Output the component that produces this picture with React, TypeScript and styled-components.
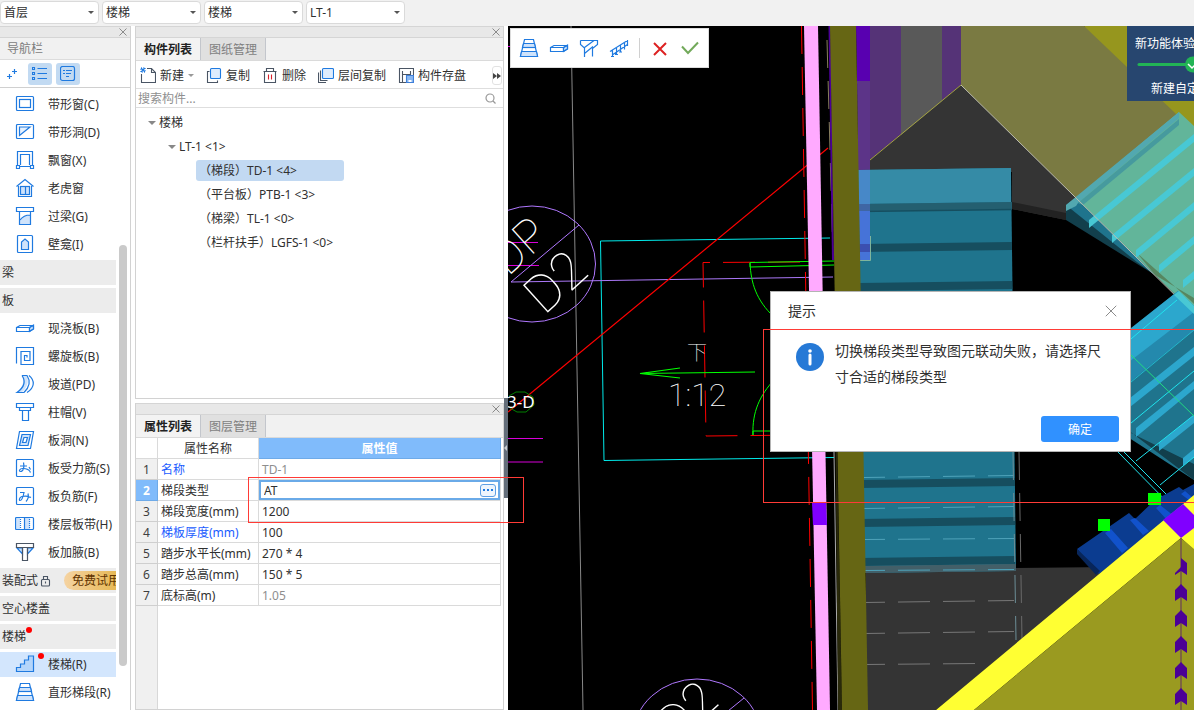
import React from "react";
import styled, { createGlobalStyle, css } from "styled-components";

const BLUE = "#1f7ae0";
const PALE = "#cfe3fb";
const INK = "#4a5564";

const GlobalStyle = createGlobalStyle`
  * { box-sizing: border-box; }
  body { margin: 0; overflow: hidden; }
  body, button, input, select, table {
    font: 12px/16px "Noto Sans", "Noto Sans CJK SC", sans-serif;
    color: #303030;
  }
  button { border: 0; padding: 0; background: none; cursor: pointer; }
  ul { list-style: none; margin: 0; padding: 0; }
`;

/* ---------- page frame ---------- */

const Page = styled.div`
  display: flex;
  flex-direction: column;
  height: 100vh;
  background: #fff;
`;

const TopBar = styled.header`
  display: flex;
  gap: 3px;
  height: 26px;
  padding: 1px 0 2px;
  background: #f1f1f1;
`;

const SelectBox = styled.label`
  display: grid;
  align-items: center;
  width: 99px;
  height: 23px;
  > * { grid-area: 1 / 1; }
  > svg { justify-self: end; margin-right: 5px; pointer-events: none; }
`;

const Select = styled.select`
  appearance: none;
  width: 100%;
  height: 23px;
  padding: 0 16px 0 3px;
  border: 1px solid #dadada;
  border-radius: 4px;
  background: #fff;
`;

const Workspace = styled.main`
  flex: 1;
  min-height: 0;
  display: grid;
  grid-template-columns: 131px 369px minmax(0, 1fr);
  column-gap: 4px;
`;

const Docks = styled.div`
  min-height: 0;
  display: grid;
  grid-template-rows: minmax(0, 373fr) minmax(0, 307fr);
  row-gap: 4px;
`;

const Panel = styled.section<{ $flushLeft?: boolean }>`
  display: flex;
  flex-direction: column;
  min-height: 0;
  overflow: hidden;
  background: #fff;
  border: solid #d2d2d2;
  border-width: ${(p) => (p.$flushLeft ? "0 1px 0 0" : "0 1px 1px 1px")};
`;

const Grip = styled.div`
  flex: none;
  display: flex;
  justify-content: flex-end;
  align-items: center;
  height: 12px;
  padding-right: 3px;
  background: #e8e8e8;
  border: solid #d5d5d5;
  border-width: 1px 0;
`;

const IconButton = styled.button`
  display: flex;
  align-items: center;
  justify-content: center;
`;

/* ---------- navigation ---------- */

const NavTitle = styled.h2`
  flex: none;
  margin: 0;
  height: 22px;
  padding-left: 7px;
  font-size: 12px;
  line-height: 21px;
  font-weight: 400;
  color: #7d7d7d;
  background: #f1f1f1;
  border-bottom: 1px solid #dcdcdc;
`;

const NavTools = styled.div`
  flex: none;
  display: flex;
  gap: 4px;
  align-items: center;
  height: 28px;
  border-bottom: 1px solid #d0d0d0;
`;

const NavTool = styled(IconButton)<{ $on?: boolean }>`
  width: 24px;
  height: 22px;
  border-radius: 3px;
  background: ${(p) => (p.$on ? "#c2daf2" : "none")};
`;

const NavBody = styled.div`
  flex: 1;
  min-height: 0;
  display: flex;
  justify-content: space-between;
`;

const NavList = styled.ul`
  display: flex;
  flex-direction: column;
  gap: 3px;
  width: 116px;
  padding-top: 4px;
  overflow: hidden;
  > li { flex: none; }
`;

const Row = styled.button<{ $kind: "item" | "group"; $on?: boolean }>`
  display: flex;
  align-items: center;
  width: 116px;
  height: 25px;
  white-space: nowrap;
  overflow: hidden;
  ${(p) =>
    p.$kind === "item"
      ? css`
          gap: 13px;
          padding-left: 15px;
          background: ${p.$on ? "#d3e6fd" : "none"};
        `
      : css`
          padding-left: 2px;
          background: #ececec;
        `}
  > svg { flex: none; }
`;

const Dotted = styled.span`
  position: relative;
  display: flex;
`;

const Dot = styled.i<{ $item?: boolean }>`
  position: absolute;
  top: ${(p) => (p.$item ? "-1px" : "-2px")};
  right: ${(p) => (p.$item ? "-9px" : "-6px")};
  width: 6px;
  height: 6px;
  border-radius: 50%;
  background: #f00;
`;

const Trial = styled.span`
  flex: none;
  height: 19px;
  margin-left: 13px;
  padding: 0 8px;
  border-radius: 10px;
  line-height: 19px;
  color: #5f3300;
  background: linear-gradient(90deg, #f5d3a2, #e6b751 55px);
`;

const Scrollbar = styled.div`
  flex: none;
  width: 8px;
  margin-right: 3px;
  padding-top: 157px;
`;

const Thumb = styled.div`
  height: 421px;
  border-radius: 4px;
  background: #cacaca;
`;

/* ---------- docks ---------- */

const Tabs = styled.div`
  flex: none;
  display: flex;
  height: 23px;
  background: #f1f1f1;
  border-bottom: 1px solid #dadada;
`;

const Tab = styled.button<{ $on?: boolean }>`
  width: 65px;
  height: 22px;
  padding-top: 2px;
  border-right: 1px solid #c3c6cc;
  color: ${(p) => (p.$on ? "#222" : "#7f7f7f")};
  font-weight: ${(p) => (p.$on ? 700 : 400)};
  background: ${(p) => (p.$on ? "#f3f3f3" : "#e0e0e0")};
`;

const Tools = styled.div`
  flex: none;
  display: flex;
  align-items: center;
  gap: 12px;
  height: 28px;
  padding: 2px 0 0 4px;
  border-bottom: 1px solid #dedede;
  white-space: nowrap;
`;

const Tool = styled.button`
  display: flex;
  align-items: center;
  gap: 4px;
  > svg { flex: none; }
`;

const More = styled(IconButton)`
  width: 10px;
  height: 19px;
  margin: 0 1px 0 auto;
  border: 1px solid #e2e2e2;
  border-radius: 3px;
`;

const Search = styled.label`
  flex: none;
  display: flex;
  align-items: center;
  height: 19px;
  padding-right: 7px;
  border-bottom: 1px solid #dedede;
`;

const SearchInput = styled.input`
  flex: 1;
  min-width: 0;
  height: 18px;
  padding: 0 2px;
  border: 0;
  outline: 0;
  &::placeholder { color: #8f8f8f; opacity: 1; }
`;

const Tree = styled.ul`
  padding-top: 2px;
`;

const Leaf = styled.li<{ $depth: number }>`
  display: flex;
  align-items: center;
  height: 24px;
  padding-left: ${(p) => p.$depth * 20 - 8}px;
`;

const LeafButton = styled.button<{ $leaf?: boolean; $on?: boolean }>`
  display: flex;
  align-items: center;
  gap: 3px;
  height: 21px;
  width: ${(p) => (p.$leaf ? "148px" : "auto")};
  padding-top: 2px;
  padding-left: ${(p) => (p.$leaf ? "3px" : "0")};
  margin-left: ${(p) => (p.$leaf ? "8px" : "0")};
  border-radius: 3px;
  white-space: nowrap;
  background: ${(p) => (p.$on ? "#c2d9f2" : "none")};
`;

const GridWrap = styled.div`
  flex: 1;
  min-height: 0;
  padding-right: 2px;
  background: linear-gradient(90deg, #f0f0f0 21px, #d8d8d8 21px 22px, #fff 22px);
`;

const Grid = styled.table`
  width: 100%;
  table-layout: fixed;
  border-collapse: separate;
  border-spacing: 0;
`;

const Head = styled.th<{ $on?: boolean; $w?: number }>`
  width: ${(p) => (p.$w ? p.$w + "px" : "auto")};
  height: 21px;
  padding: 2px 0 0;
  font-weight: ${(p) => (p.$on ? 700 : 400)};
  color: ${(p) => (p.$on ? "#fff" : "#303030")};
  background: ${(p) => (p.$on ? "#80bbfb" : "#fff")};
  border: solid ${(p) => (p.$on ? "#6eaae8" : "#dadada")};
  border-width: 0 1px 1px 0;
`;

const Num = styled.th<{ $on?: boolean }>`
  height: 21px;
  padding: 2px 0 0;
  font-weight: ${(p) => (p.$on ? 700 : 400)};
  color: ${(p) => (p.$on ? "#fff" : "#404040")};
  background: ${(p) => (p.$on ? "#80bbfb" : "#f0f0f0")};
  border: solid ${(p) => (p.$on ? "#6eaae8" : "#cfcfcf")};
  border-width: 0 1px 1px 0;
`;

const Cell = styled.td<{ $tone?: "link" | "muted"; $edit?: boolean }>`
  height: 21px;
  padding: ${(p) => (p.$edit ? "0" : "2px 3px 0")};
  white-space: nowrap;
  color: ${(p) => (p.$tone === "link" ? "#1a5cff" : p.$tone === "muted" ? "#8e8e8e" : "#303030")};
  border: solid #dadada;
  border-width: 0 1px 1px 0;
`;

const Editor = styled.div`
  display: flex;
  align-items: center;
  height: 20px;
  padding: 0 2px 0 3px;
  border: 2px solid #6aaae8;
`;

const EditInput = styled.input`
  flex: 1;
  min-width: 0;
  height: 16px;
  padding: 2px 0 0;
  border: 0;
  outline: 0;
`;

const Dots = styled(IconButton)`
  width: 16px;
  height: 13px;
  border: 1px solid #5e9fe4;
  border-radius: 3px;
  background: #eef5fd;
`;

/* ---------- drawing area ---------- */

const Viewport = styled.section`
  position: relative;
  min-height: 0;
  background: #000;
`;

const Canvas = styled.svg`
  display: block;
  width: 100%;
  height: 100%;
`;

const Splitter = styled.button`
  position: absolute;
  left: -4px;
  top: 372px;
  width: 4px;
  height: 100px;
  display: flex;
  align-items: center;
  background: #646e7a;
`;

const FloatBar = styled.div`
  position: absolute;
  left: 2px;
  top: 2px;
  display: flex;
  align-items: center;
  gap: 10px;
  height: 40px;
  padding: 0 8px;
  background: #fff;
  border: 1px solid #dcdcdc;
`;

const Rule = styled.i`
  width: 1px;
  height: 20px;
  background: #d0d0d0;
`;

const Promo = styled.aside`
  position: absolute;
  right: 0;
  top: 0;
  display: flex;
  flex-direction: column;
  width: 67px;
  height: 75px;
  padding: 10px 0 4px 8px;
  overflow: hidden;
  white-space: nowrap;
  color: #fff;
  background: #27466f;
  > svg { flex: none; margin: 4px 0 8px; }
`;

const PromoStep = styled.span`
  padding-left: 16px;
`;

const Dialog = styled.div`
  position: absolute;
  left: 262px;
  top: 265px;
  width: 361px;
  padding: 0 11px 9px 17px;
  background: #fff;
  border: 1px solid #b4b4b4;
`;

const DialogHead = styled.div`
  display: flex;
  align-items: center;
  justify-content: space-between;
  height: 38px;
`;

const DialogClose = styled(IconButton)`
  width: 16px;
  height: 16px;
`;

const DialogTitle = styled.h3`
  margin: 0;
  font-size: 14px;
  line-height: 20px;
  font-weight: 400;
`;

const DialogBody = styled.div`
  display: flex;
  gap: 11px;
  padding: 8px 8px 0 8px;
  height: 86px;
  > svg { flex: none; margin-top: 5px; }
`;

const Message = styled.p`
  margin: 0;
  width: 270px;
  font-size: 14px;
  line-height: 26px;
`;

const DialogFoot = styled.div`
  display: flex;
  justify-content: flex-end;
`;

const Confirm = styled.button`
  width: 78px;
  height: 26px;
  padding-top: 2px;
  border-radius: 3px;
  color: #fff;
  background: #3091ff;
`;

const Mark = styled.div<{ $x: number; $y: number; $w?: number; $h: number }>`
  position: absolute;
  left: ${(p) => p.$x}px;
  top: ${(p) => p.$y}px;
  height: ${(p) => p.$h}px;
  border: 1px solid #ff3b36;
  pointer-events: none;
  ${(p) => (p.$w ? `width: ${p.$w}px;` : "right: 0; border-right: 0;")}
`;

/* ---------- icons ---------- */

const Cross = ({ size = 8, color = "#8b8b8b" }: { size?: number; color?: string }) => (
  <svg width={size} height={size} viewBox="0 0 8 8" stroke={color} fill="none">
    <path d="M.5.5l7 7M7.5.5l-7 7" vectorEffect="non-scaling-stroke" />
  </svg>
);

const Caret = ({ w = 6, color = "#555" }: { w?: number; color?: string }) => (
  <svg width={w} height={w / 2} viewBox="0 0 6 3" fill={color}><path d="M0 0h6L3 3z" /></svg>
);

const glyphs: Record<string, React.ReactNode> = {
  window: <><rect x="1.5" y="2.5" width="17" height="14" rx="1" /><rect x="4.5" y="5.5" width="11" height="8" /></>,
  hole: <><rect x="1.5" y="2.5" width="17" height="14" rx="1" /><path d="M4.5 5h10.500l-10.500 8.500z" fill="#e6f1fe" /></>,
  bay: <><path d="M2.500 15V1.500h15V15M5.500 15V4.500h9V15M1.500 15.500h3v3h-3zM15.500 15.500h3v3h-3zM4.500 16.500h11" /></>,
  dormer: <><path d="M1.500 8.500L10 1.500l8.500 7M3.500 8v10.500h13V8" /><rect x="5.500" y="8.500" width="9" height="8" fill={PALE} /><path d="M10.500 8.500v8" /></>,
  lintel: <><path d="M4.500 14c3-4 6-5 11-5v9.500h-11z" fill={PALE} stroke="none" /><path d="M1.500 1.500h17v4h-17zM4.500 6v12.500h11V6M5 14c3-4 6-5 10-5" /></>,
  niche: <><rect x="2.500" y="1.500" width="15" height="17" rx="1" /><path d="M6.500 15.500V8L10 5l3.500 3v7.500z" fill={PALE} /></>,
  slab: <><path d="M14.500 9.500l4-2.500v4l-4 2.500z" fill={PALE} /><path d="M1.500 9.500h13v4h-13zM1.500 9.500L5 7.500h13.500L14.500 9.500M18.500 7.500V11l-4 2.500" /></>,
  spiral: <path d="M1.500 17.500V1.500h17v17h-12.500V5.500h9v9h-5.500v-5h2.500v2" />,
  ramp: <><path d="M7 2c3 6 0 12-5 16h5c5-4 7-10 5-16z" fill={PALE} stroke="none" /><path d="M7 1.500c4 6 2 12-5 17h7M7 1.500h5c4 6 2 12-3 17M14 1.500c6 5 6 12-2 17" /></>,
  cap: <path d="M1.500 1.500h17v4h-17zM4.500 5.500h11v3h-11zM7.500 8.500v10h6v-10" />,
  opening: <><path d="M4.500 1.500h14L15.500 18.500h-14z" /><path d="M7 4.500h8.500L13 15.500H4.500z" fill={PALE} /><path d="M9 7.500h3.500l-1.500 5H7.500z" fill="#fff" /></>,
  rebar: <><rect x="1.500" y="1.500" width="17" height="17" rx="1" /><path d="M5 8h7M8.500 4.500c1 4 0 9-3 9-2 0-1-3 2-3 4 0 7 1 8 4M14 9l1.500 2.500" /></>,
  negbar: <><rect x="1.500" y="1.500" width="17" height="17" rx="1" /><path d="M5 6.500h4c-1 5-2 8-4 8-1 0-1-3 2-4 4-1 7 0 9 1M13 7.500c1 4 0 6-2 8" /></>,
  strip: <><path d="M10 4h5v12h-5zM1 4h4v12H1z" fill={PALE} stroke="none" /><rect x=".5" y="3.500" width="18" height="12" rx="1" /><path d="M9.500 4v12" /><path d="M5.500 5v10M14.500 5v10" strokeDasharray="1 1" /></>,
  haunch: <><path d="M2 6l5.500 6V6zM18 6l-5.500 6V6z" fill={PALE} stroke={BLUE} /><path d="M1.500 1.500h17v4h-17zM7.500 6v12.500h5V6" stroke={INK} /></>,
  stairs: <path d="M1.500 17.500v-4h4v-3.500h4V6h4V2h5v15.500z" fill="#b4d5fa" />,
  flight: <><path d="M5.500 1.500h9l4 17h-17z" fill="#fff" /><path d="M4.500 5.500h11l1 4h-13zM2.500 13.500h15l1 5h-17z" fill={PALE} /><path d="M3.500 9.500h13" /></>,
  beam: <path d="M1.500 2.500h17v4L13.500 10.500v8M1.500 2.500v4l4 3.500v9M5.500 9.500L15 2.500M5.500 15.500l8.500-7" />,
  rail: <path d="M1 13.500L18.500 2.500M4 16.500L18.500 6.500M3.500 12v7M7.500 10v6.500M11.500 7.500V14M15.500 5v6.500M18.500 2v6M2 18.500h3M6 16.500h3M10 14h3" />,
};

const Glyph = ({ name }: { name: string }) => (
  <svg width="20" height="21" viewBox="0 0 20 21" fill="none" stroke={BLUE} strokeWidth="1.2">{glyphs[name]}</svg>
);

const toolIcons: Record<string, React.ReactNode> = {
  create: <><path d="M7 1.500h4.500l4 4v10h-14V7M11.500 1.500v4h4" /><path d="M1 1h4v4H1z" stroke={BLUE} strokeDasharray="1 1" /><path d="M1 1l4 4M5 1L1 5" stroke={BLUE} /></>,
  copy: <><path d="M3.500 4.500h-2v11h10v-2" /><rect x="4.500" y="1.500" width="10" height="10" rx="1" stroke={BLUE} fill="#dfecfd" /></>,
  remove: <><path d="M1.500 4.500h13M2.500 4.500v11h11v-11M4.500 4.500v-3h7v3" /><path d="M6.500 7.500v5M9.500 7.500v5" stroke="#d9202a" /></>,
  layers: <><path d="M.5 5.500v10H8M2.500 3.500v10h7" /><rect x="4.500" y="1.500" width="11" height="10" rx="1" stroke={BLUE} fill="#dfecfd" /></>,
  save: <><path d="M8 15.500H1.500v-14h14V8M4.500 4v11M4.500 7.500h8M12.500 4v4" /><path d="M8.500 8.500h7v7h-7z" fill="#8ab8f2" stroke="#3f7fd8" /><path d="M10.500 13h3v2h-3z" fill="#fff" stroke="none" /></>,
};

const ToolIcon = ({ name }: { name: string }) => (
  <svg width="16" height="18" viewBox="0 0 16 18" fill="none" stroke={INK} strokeWidth="1.1">{toolIcons[name]}</svg>
);

/* ---------- data ---------- */

type NavEntry = { label: string; icon?: string; on?: boolean; dot?: boolean; trial?: boolean };

const nav: NavEntry[] = [
  { label: "带形窗(C)", icon: "window" },
  { label: "带形洞(D)", icon: "hole" },
  { label: "飘窗(X)", icon: "bay" },
  { label: "老虎窗", icon: "dormer" },
  { label: "过梁(G)", icon: "lintel" },
  { label: "壁龛(I)", icon: "niche" },
  { label: "梁" },
  { label: "板" },
  { label: "现浇板(B)", icon: "slab" },
  { label: "螺旋板(B)", icon: "spiral" },
  { label: "坡道(PD)", icon: "ramp" },
  { label: "柱帽(V)", icon: "cap" },
  { label: "板洞(N)", icon: "opening" },
  { label: "板受力筋(S)", icon: "rebar" },
  { label: "板负筋(F)", icon: "negbar" },
  { label: "楼层板带(H)", icon: "strip" },
  { label: "板加腋(B)", icon: "haunch" },
  { label: "装配式", trial: true },
  { label: "空心楼盖" },
  { label: "楼梯", dot: true },
  { label: "楼梯(R)", icon: "stairs", on: true, dot: true },
  { label: "直形梯段(R)", icon: "flight" },
];

const tree = [
  { label: "楼梯", depth: 1 },
  { label: "LT-1 <1>", depth: 2 },
  { label: "（梯段）TD-1 <4>", depth: 3, on: true },
  { label: "（平台板）PTB-1 <3>", depth: 3 },
  { label: "（梯梁）TL-1 <0>", depth: 3 },
  { label: "（栏杆扶手）LGFS-1 <0>", depth: 3 },
];

const props: { name: string; value: string; link?: boolean; muted?: boolean; edit?: boolean }[] = [
  { name: "名称", value: "TD-1", link: true, muted: true },
  { name: "梯段类型", value: "AT", edit: true },
  { name: "梯段宽度(mm)", value: "1200" },
  { name: "梯板厚度(mm)", value: "100", link: true },
  { name: "踏步水平长(mm)", value: "270 * 4" },
  { name: "踏步总高(mm)", value: "150 * 5" },
  { name: "底标高(m)", value: "1.05", muted: true },
];

/* ---------- model drawing ---------- */

const treadBands = [
  [244, 242], [283, 281], [322, 320], [361, 359], [401, 399], [441, 439], [480, 478], [519, 517], [558, 556],
];
const dashedRows = [[477, 475], [508, 506], [539, 538], [570, 569], [602, 600], [633, 631], [664, 663]];

const Scene = () => (
  <Canvas viewBox="508 26 686 684" preserveAspectRatio="xMinYMin slice" fill="none" aria-label="model view">
    <path d="M571 26L583 710" stroke="#888" />

    {/* storey floor and roof planes */}
    <path d="M870 160L961 85L1076 198L1066 220L1012 209V172H858V160z" fill="#343434" />
    <path d="M1012 202L1066 213V220L1012 209z" fill="#222" />
    <path d="M1016 568L1110 567L936 710H866V568z" fill="#343434" />
    <path d="M1084 26H1194V313L1160 268L1128 120z" fill="#96961e" />
    <path d="M961 26H1084L1174 112L1180 118L1076 198L961 85z" fill="#7a7a42" />
    <path d="M856 26H870V81H857z" fill="#5800b0" />
    <path d="M857 81H870V170H858z" fill="#5c3488" />
    <path d="M870 26H961V85L870 160z" fill="#553377" />
    <path d="M901 26H942V101L901 135z" fill="#595959" />
    <path d="M870 160L961 85" stroke="#a3a340" />

    {/* left flight */}
    <path d="M858 170L1011 168L1016 571L864 573z" fill="#1f748d" />
    <path d="M858 170L1011 168V202L858 204z" fill="#358ba6" />
    <path d="M858 204L1012 202V209L858 211z" fill="#245f70" />
    <path d="M858 211.500L1012 209.500" stroke="#164e5f" strokeWidth="1.500" />
    {treadBands.map(([l, r]) => (
      <path key={l} d={`M859 ${l}L${r > 440 ? 1015 : 1012} ${r}v8L859 ${l + 8}z`} fill="#164e5f" />
    ))}
    <path d="M864 566L1016 564V571L864 573z" fill="#435f68" />
    <path d="M859 170H870V204H859z" fill="#4788c8" />
    <path d="M859 204H870V211H859z" fill="#3f66a4" />
    <path d="M859 211H870V260H860z" fill="#4673d8" />
    <path d="M859 244H870V252H860z" fill="#3b4fb0" />
    <path d="M860 260.500H870.500V236" stroke="#7fb59c" />
    {dashedRows.map(([l, r], i) => (
      <path key={l} d={`M864 ${l}.5L${i > 5 ? 980 : 1014} ${r}.5`} stroke={i < 4 ? "#4fa3ba" : "#777"} strokeDasharray="32 13" strokeDashoffset="11" />
    ))}
    <path d="M1013 452L1016 640" stroke="#6b8d96" strokeDasharray="28 13" />
    <path d="M1019 452L1022 640" stroke="#6a6a6a" strokeDasharray="28 13" />

    {/* upper right flight */}
    <path d="M1066 205V220L1155 275L1085 200z" fill="#123f4c" />
    <path d="M1066 205L1076 198L1140 260L1155 275L1137 262z" fill="#1f748d" />
    <path d="M1076 198L1179 112L1194 126V313L1155 275z" fill="#62b59a" />
    <path d="M1137 253L1190 300L1194 304V298L1155 275z" fill="#578660" />
    <path d="M1066 205L1179 112V118L1078 203L1076 206L1066 211z" fill="#52a8b0" />
    <path d="M1078 203L1179 119V125L1083 205z" fill="#469a9e" />
    <g fill="#48c8d4">
      <path d="M1089 220L1194 134V142L1089 228z" />
      <path d="M1112 235L1194 168V176L1112 243z" />
      <path d="M1136 250L1194 202V210L1136 258z" />
      <path d="M1159 265L1194 236V244L1159 273z" />
      <path d="M1183 280L1194 271V279L1183 288z" />
    </g>
    <path d="M961 85L1186 306" stroke="#bdbdb0" />

    {/* lower right flight */}
    <path d="M1120 432L1131 328L1178 291L1194 306V480z" fill="#1f748d" />
    <path d="M1120 424L1131 433L1194 464V480z" fill="#123f4c" />
    <path d="M1125 360L1194 310V330L1125 386z" fill="#2489ad" />
    <g fill="#2ca7cd">
      <path d="M1125 333L1178 291L1194 306V312L1125 365z" />
      <path d="M1125 402L1194 347V356L1125 411z" />
      <path d="M1136 428L1194 381V389L1136 437z" />
      <path d="M1159 443L1194 415V423L1159 451z" />
      <path d="M1183 458L1194 449V457L1183 466z" />
    </g>
    <path d="M1174 295L1179 291L1194 306V314z" fill="#48c8d4" />
    <path d="M1125 344L1177 300M1125 428L1194 371M1136 461L1194 415M1160 485L1194 457M1118 452L1176 511M1124 452L1182 510" stroke="#20e3ee" />
    <path d="M1125 387L1194 330" stroke="#23b7cc" />
    <path d="M1131 355L1194 416" stroke="#22dc80" />

    {/* selected flight with grips */}
    <path d="M1077 549L1129 513L1135 519L1155 500L1179 487L1183 490L1194 484V500L1099 574z" fill="#0b3c90" />
    <path d="M1077 549V554L1096 575L1100 571z" fill="#08265a" />
    <path d="M1105 533L1111 529L1128 548L1122 553zM1130 520L1135 518L1149 531L1143 535zM1156 508L1160 505L1174 516L1168 521zM1181 494L1185 491L1194 499V504z" fill="#1152cc" />
    <path d="M936 710L1194 495V550L1181 538L974 710z" fill="#ffff33" />
    <path d="M974 710L1181 538L1194 549V710z" fill="#9a9a20" />
    <path d="M1163 520L1183 504L1194 515V528L1181 538z" fill="#8000ff" />
    <path d="M1098 519h12v12h-12zM1148 493h13v12h-13z" fill="#0f0" />
    <path d="M1181 538V710" stroke="#7d6440" strokeWidth="2" />
    {[584, 610, 636, 662, 688].map((y) => (
      <path key={y} d={`M1175 ${y + 6}L1181 ${y}L1187 ${y + 6}V${y + 17}L1181 ${y + 13}L1175 ${y + 17}z`} fill="#4b0096" />
    ))}
    <path d="M1181 558L1187 563V575L1181 571L1175 575V573L1181 567z" fill="#4b0096" />

    {/* plan outlines */}
    <path d="M830 238L600.500 241L604 460.500L834 457.500" stroke="#00eaea" />
    <path d="M511 282L833 277" stroke="#ab78f8" />
    <path d="M508 412L828 148" stroke="#ff0000" strokeWidth="1.200" />
    <path d="M801.500 26L812.500 710" stroke="#f00" strokeDasharray="28 13" />
    <path d="M800 262L703 262.500L706 436L806 435" stroke="#f00" strokeDasharray="32 13" />
    <path d="M834 261L750 262.500V267L834 265M750 263C751 283 756 300 774 317M774 431H753V435C752 412 760 395 774 380" stroke="#0f0" />
    <path d="M755 372L640 373.500L680 368M640 373.500L680 378" stroke="#0f0" strokeWidth="1.200" />
    <path d="M508 46.500H512M508 242.500H538M508 265.500H539M508 438.500H543M508 462H543" stroke="#d800d8" />
    <ellipse cx="532" cy="264" rx="63.500" ry="58" stroke="#b078ff" />
    <path d="M511 282L579 225M744 698L728 711" stroke="#b078ff" />
    <ellipse cx="697" cy="737" rx="64" ry="58" stroke="#b078ff" />
    <path d="M509 396l7-4h9l8 5 1 8-8 7h-9l-7-4" stroke="#008000" />

    {/* walls */}
    <path d="M804 26H818L830 710H817z" fill="#ffaaff" />
    <path d="M812 503H826L827 525H813z" fill="#8000ff" />
    <path d="M827 40L833 260" stroke="#8a8060" strokeDasharray="28 13" />
    <path d="M829.500 26L833 260" stroke="#4b0096" strokeWidth="2" />
    <path d="M834 452L838 710" stroke="#aaa" />
    <path d="M834 290L842 710H838z" fill="#29290a" />
    <path d="M830 26H856L868 710H842z" fill="#666614" />

    {/* annotation text */}
    <g fill="#fff" fontFamily="Roboto, 'Noto Sans CJK SC', sans-serif">
      <text x="507" y="408" fontSize="17" fontFamily="'Noto Sans', sans-serif">3-D</text>
      <g fontWeight="100">
        <text x="668" y="406" fontSize="32">1:12</text>
        <text x="687" y="360" fontSize="20" fontFamily="'Noto Sans CJK SC', sans-serif">下</text>
        <text transform="translate(544 316) rotate(-42)" fontSize="52">D2</text>
        <text transform="translate(508 277) rotate(-42)" fontSize="46">DP</text>
        <text transform="translate(676 744) rotate(-42)" fontSize="50">D2</text>
      </g>
    </g>
  </Canvas>
);

/* ---------- screen ---------- */

const Picker = ({ label, value }: { label: string; value: string }) => (
  <SelectBox>
    <Select aria-label={label} defaultValue={value}><option>{value}</option></Select>
    <Caret />
  </SelectBox>
);

const PanelGrip = () => (
  <Grip><IconButton aria-label="关闭"><Cross /></IconButton></Grip>
);

export default function App() {
  return (
    <Page>
      <GlobalStyle />
      <TopBar>
        <Picker label="楼层" value="首层" />
        <Picker label="类别" value="楼梯" />
        <Picker label="类型" value="楼梯" />
        <Picker label="构件" value="LT-1" />
      </TopBar>

      <Workspace>
        <Panel $flushLeft>
          <PanelGrip />
          <NavTitle>导航栏</NavTitle>
          <NavTools>
            <NavTool aria-label="添加">
              <svg width="12" height="12" viewBox="0 0 12 12" stroke={BLUE} strokeWidth="1.200"><path d="M8.500 1v5M6 3.500h5M3.500 6v5M1 8.500h5" /></svg>
            </NavTool>
            <NavTool $on aria-label="列表">
              <svg width="16" height="16" viewBox="0 0 16 16" fill="none" stroke={BLUE} strokeWidth="1.100">
                <path d="M.5 1.500h2v2h-2zM.5 6.500h2v2h-2zM.5 11.500h2v2h-2zM5.500 2.500H15M5.500 7.500H15M5.500 12.500H15" />
              </svg>
            </NavTool>
            <NavTool $on aria-label="详情">
              <svg width="16" height="16" viewBox="0 0 16 16" fill="none" stroke={BLUE} strokeWidth="1.200">
                <rect x=".5" y=".5" width="14" height="14" rx="2" /><path d="M3 4.500h2M6 4.500h6M3 7.500h2M6 7.500h5M6 10.500h3" />
              </svg>
            </NavTool>
          </NavTools>
          <NavBody>
            <NavList>
              {nav.map((n) => (
                <li key={n.label}>
                  {n.icon ? (
                    <Row $kind="item" $on={n.on}>
                      <Dotted><Glyph name={n.icon} />{n.dot && <Dot $item />}</Dotted>
                      {n.label}
                    </Row>
                  ) : (
                    <Row $kind="group">
                      <Dotted>{n.label}{n.dot && <Dot />}</Dotted>
                      {n.trial && (
                        <>
                          <svg width="13" height="12" viewBox="0 0 13 12" fill="none" stroke={INK} strokeWidth="1.100">
                            <rect x="3.500" y="4.500" width="8" height="6.500" rx="1" /><path d="M5.500 4.500V1.500h4v3M7.500 6.500v2" />
                          </svg>
                          <Trial>免费试用</Trial>
                        </>
                      )}
                    </Row>
                  )}
                </li>
              ))}
            </NavList>
            <Scrollbar><Thumb /></Scrollbar>
          </NavBody>
        </Panel>

        <Docks>
          <Panel>
            <PanelGrip />
            <Tabs role="tablist">
              <Tab role="tab" aria-selected $on>构件列表</Tab>
              <Tab role="tab">图纸管理</Tab>
            </Tabs>
            <Tools>
              <Tool><ToolIcon name="create" />新建<Caret color="#999" /></Tool>
              <Tool><ToolIcon name="copy" />复制</Tool>
              <Tool><ToolIcon name="remove" />删除</Tool>
              <Tool><ToolIcon name="layers" />层间复制</Tool>
              <Tool><ToolIcon name="save" />构件存盘</Tool>
              <More aria-label="更多">
                <svg width="8" height="6" viewBox="0 0 8 6" fill="#444"><path d="M0 0l4 3-4 3zM4 0l4 3-4 3z" /></svg>
              </More>
            </Tools>
            <Search>
              <SearchInput aria-label="搜索构件" placeholder="搜索构件..." />
              <svg width="11" height="11" viewBox="0 0 11 11" fill="none" stroke="#999" strokeWidth="1.200"><circle cx="5" cy="5" r="4" /><path d="M8 8l2.500 2.500" /></svg>
            </Search>
            <Tree>
              {tree.map((t) => (
                <Leaf key={t.label} $depth={t.depth}>
                  <LeafButton $leaf={t.depth === 3} $on={t.on}>
                    {t.depth < 3 && <Caret w={8} color="#888" />}
                    {t.label}
                  </LeafButton>
                </Leaf>
              ))}
            </Tree>
          </Panel>

          <Panel>
            <PanelGrip />
            <Tabs role="tablist">
              <Tab role="tab" aria-selected $on>属性列表</Tab>
              <Tab role="tab">图层管理</Tab>
            </Tabs>
            <GridWrap>
              <Grid>
                <thead>
                  <tr><Head $w={22} /><Head $w={101}>属性名称</Head><Head $on>属性值</Head></tr>
                </thead>
                <tbody>
                  {props.map((p, i) => (
                    <tr key={p.name}>
                      <Num $on={p.edit} scope="row">{i + 1}</Num>
                      <Cell $tone={p.link ? "link" : undefined}>{p.name}</Cell>
                      <Cell $tone={p.muted ? "muted" : undefined} $edit={p.edit}>
                        {p.edit ? (
                          <Editor>
                            <EditInput aria-label={p.name} defaultValue={p.value} />
                            <Dots aria-label="选择">
                              <svg width="10" height="2" fill={BLUE}><path d="M0 0h2v2H0zM4 0h2v2H4zM8 0h2v2H8z" /></svg>
                            </Dots>
                          </Editor>
                        ) : p.value}
                      </Cell>
                    </tr>
                  ))}
                </tbody>
              </Grid>
            </GridWrap>
          </Panel>
        </Docks>

        <Viewport>
          <Scene />
          <Splitter aria-label="折叠"><svg width="3" height="6" viewBox="0 0 3 6" fill="#c8ccd0"><path d="M3 0v6L0 3z" /></svg></Splitter>
          <FloatBar>
            <IconButton aria-label="梯段"><Glyph name="flight" /></IconButton>
            <IconButton aria-label="平台板"><Glyph name="slab" /></IconButton>
            <IconButton aria-label="梯梁"><Glyph name="beam" /></IconButton>
            <IconButton aria-label="栏杆扶手"><Glyph name="rail" /></IconButton>
            <Rule />
            <IconButton aria-label="取消">
              <svg width="20" height="20" viewBox="0 0 20 20" stroke="#dd2222" strokeWidth="2"><path d="M4 5l12 12M16 5l-12 12" /></svg>
            </IconButton>
            <IconButton aria-label="确认">
              <svg width="20" height="20" viewBox="0 0 20 20" fill="none" stroke="#72a95a" strokeWidth="2"><path d="M2 8.500l6 6.500L18 4.500" /></svg>
            </IconButton>
          </FloatBar>
          <Promo>
            新功能体验
            <svg width="64" height="17" viewBox="0 0 64 17" fill="none">
              <path d="M4 8.500H58" stroke="#22b455" strokeWidth="3" strokeLinecap="round" />
              <circle cx="58" cy="8.500" r="8" fill="#22b455" /><path d="M53 8l4 4 6-6" stroke="#fff" strokeWidth="1.500" />
            </svg>
            <PromoStep>新建自定义</PromoStep>
          </Promo>
          <Dialog role="dialog" aria-label="提示">
            <DialogHead>
              <DialogTitle>提示</DialogTitle>
              <DialogClose aria-label="关闭"><Cross size={12} /></DialogClose>
            </DialogHead>
            <DialogBody>
              <svg width="28" height="28" viewBox="0 0 28 28"><circle cx="14" cy="14" r="14" fill="#2679d6" /><circle cx="14" cy="8" r="1.800" fill="#fff" /><path d="M14 12v9" stroke="#fff" strokeWidth="3" strokeLinecap="round" /></svg>
              <Message>切换梯段类型导致图元联动失败，请选择尺寸合适的梯段类型</Message>
            </DialogBody>
            <DialogFoot><Confirm>确定</Confirm></DialogFoot>
          </Dialog>
          <Mark $x={-260} $y={451} $w={276} $h={46} />
          <Mark $x={255} $y={303} $h={174} />
        </Viewport>
      </Workspace>
    </Page>
  );
}
